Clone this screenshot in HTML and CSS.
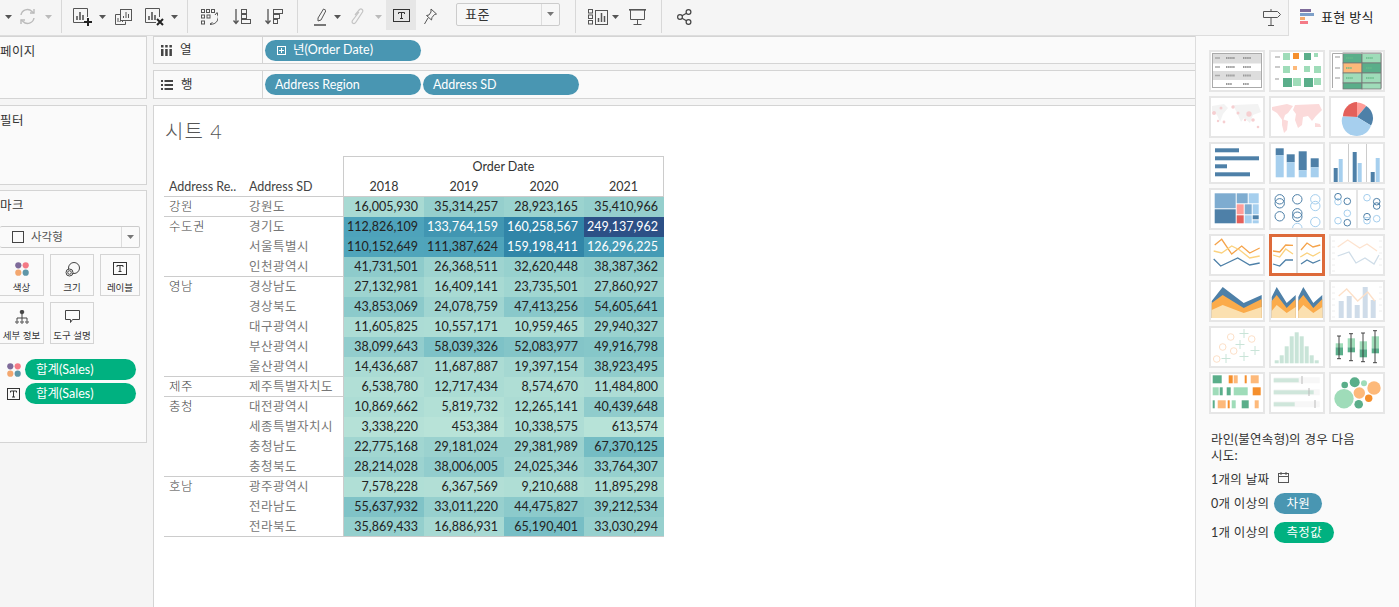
FILE: index.html
```html
<!DOCTYPE html>
<html lang="ko">
<head>
<meta charset="utf-8">
<title>시트 4</title>
<link rel="stylesheet" href="styles.css">
</head>
<body>
<header class="toolbar">
  <svg class="caret ml5" viewBox="0 0 7 4"><path d="M0 0h7L3.5 4z"/></svg>
  <svg class="ic ml7" width="17" height="17" viewBox="0 0 17 17" fill="none" stroke="#bbb" stroke-width="1.4"><path d="M2 7a6.5 6.5 0 0 1 11-3.5L15 5M15 10a6.5 6.5 0 0 1-11 3.5L2 12"/><path d="M15 1v4h-4M2 16v-4h4"/></svg>
  <svg class="caret caret-off ml9" viewBox="0 0 7 4"><path d="M0 0h7L3.5 4z"/></svg>
  <i class="sep ml9"></i>

  <svg class="ic ml11" width="19" height="18" viewBox="0 0 19 18" fill="none" stroke="#555"><path d="M12 14.5H.5V.5h14V9"/><path d="M4 12V8M7 12V4M10 12V7" stroke-width="1.6"/><path d="M15 10v8M11 14h8" stroke="#222" stroke-width="2"/></svg>
  <svg class="caret ml7" viewBox="0 0 7 4"><path d="M0 0h7L3.5 4z"/></svg>
  <svg class="ic ml9" width="17" height="16" viewBox="0 0 17 16" fill="none" stroke="#555"><path d="M5.500 5.500H.5v10h10v-3"/><rect x="5.500" y=".5" width="11" height="11"/><path d="M8.500 9V7M11 9V3M13.500 9V5M3 13v-4M5 13v-1M7.500 13v-1"/></svg>
  <svg class="ic ml13" width="19" height="18" viewBox="0 0 19 18" fill="none" stroke="#555"><path d="M11 14.500H.5V.5h14V9"/><path d="M4 12V8M7 12V4M10 12V7" stroke-width="1.6"/><path d="M12 11l6 6M18 11l-6 6" stroke="#222" stroke-width="2"/></svg>
  <svg class="caret ml7" viewBox="0 0 7 4"><path d="M0 0h7L3.500 4z"/></svg>
  <i class="sep ml9"></i>

  <svg class="ic ml13" width="17" height="16" viewBox="0 0 17 16" fill="none" stroke="#555"><rect x=".5" y=".5" width="3" height="3"/><rect x="5.500" y=".5" width="3" height="3"/><rect x="10.500" y=".5" width="3" height="3"/><rect x=".5" y="6" width="3" height="3"/><rect x="6" y="6" width="3" height="3"/><rect x=".5" y="12" width="3" height="3"/><path d="M16 4a7 7 0 0 1-7 11M14 6l2-2.500 1 3M9 15l2.500-1.500M9 15l2 1.500"/></svg>
  <svg class="ic ml15" width="18" height="17" viewBox="0 0 18 17" fill="none" stroke="#555"><path d="M3 1v14M.5 12.500 3 15.500l2.500-3" stroke-width="1.300"/><rect x="8.500" y="1.500" width="5" height="4"/><rect x="8.500" y="6.500" width="5" height="4"/><rect x="8.500" y="11.500" width="9" height="4"/></svg>
  <svg class="ic ml14" width="18" height="17" viewBox="0 0 18 17" fill="none" stroke="#555"><path d="M3 1v14M.5 12.500 3 15.500l2.500-3" stroke-width="1.300"/><rect x="8.500" y="1.500" width="9" height="4"/><rect x="8.500" y="6.500" width="6" height="4"/><rect x="8.500" y="11.500" width="4" height="4"/></svg>
  <i class="sep ml14"></i>

  <svg class="ic ml16" width="12" height="18" viewBox="0 0 12 18" fill="none" stroke="#555"><path d="M4 10 9.500 1 12 2.500 7 12 4 13z"/><path d="M0 17h12" stroke="#777" stroke-width="2"/></svg>
  <svg class="caret ml8" viewBox="0 0 7 4"><path d="M0 0h7L3.500 4z"/></svg>
  <svg class="ic ml10" width="13" height="18" viewBox="0 0 13 18" fill="none" stroke="#c4c4c4" stroke-width="1.200"><path d="M4 7 8.500 1.500c2-1.500 4 .5 3 2.500L5 14c-2 3-5 1-3.500-1.500L8 4"/></svg>
  <svg class="caret caret-off ml11" viewBox="0 0 7 4"><path d="M0 0h7L3.500 4z"/></svg>
  <div class="tbtn ml4"><svg width="17" height="13" viewBox="0 0 17 13" fill="none" stroke="#333"><rect x=".5" y=".5" width="16" height="12"/><path d="M5.500 5V3.500h6V5M8.500 3.500v6M7 9.500h3"/></svg></div>
  <svg class="ic ml8" width="13" height="17" viewBox="0 0 13 17" fill="none" stroke="#555"><path d="M7 1l5.500 5-2 .5-2.500 3-.5 2.500L2.500 7.500 5 7l2-3z"/><path d="M4 10 .5 16"/></svg>
  <div class="select ml19"><span class="select-t">표준</span><span class="select-b"><svg class="caret caret-g" viewBox="0 0 7 4"><path d="M0 0h7L3.500 4z"/></svg></span></div>
  <i class="sep ml15"></i>

  <svg class="ic ml12" width="20" height="16" viewBox="0 0 20 16" fill="none" stroke="#555"><rect x=".5" y=".5" width="4" height="3.500"/><rect x=".5" y="6" width="4" height="3.500"/><rect x=".5" y="11.500" width="4" height="3.500"/><rect x="7.500" y="1.500" width="12" height="14"/><path d="M10.500 13V9M13.500 13V4M16.500 13V7" stroke-width="1.500"/></svg>
  <svg class="caret ml4" viewBox="0 0 7 4"><path d="M0 0h7L3.500 4z"/></svg>
  <svg class="ic ml10" width="17" height="16" viewBox="0 0 17 16" fill="none" stroke="#555"><path d="M0 .8h17" stroke-width="1.600"/><path d="M1.500 1v9.500h14V1M8.500 10.500V15M4.500 15.500h8"/></svg>
  <i class="sep ml15"></i>

  <svg class="ic ml15" width="15" height="16" viewBox="0 0 15 16" fill="none" stroke="#444" stroke-width="1.200"><circle cx="3" cy="8" r="2.400"/><circle cx="11.500" cy="3" r="2.400"/><circle cx="11.500" cy="13" r="2.400"/><path d="M5 6.800 9.500 4.200M5 9.200l4.500 2.600"/></svg>

  <svg class="ic push" width="18" height="18" viewBox="0 0 18 18" fill="none" stroke="#555"><path d="M.5 3.500h14l3 3-3 3H.5zM8 1v2.500M8 9.500V17M5 17.500h6"/></svg>
  <div class="tab">
    <svg width="14" height="15" viewBox="0 0 14 15"><rect width="11" height="3" fill="#7e6b9a"/><rect y="4" width="14" height="3" fill="#7d9fc8"/><rect y="8" width="5" height="3" fill="#f5a96b"/><rect y="12" width="8" height="3" fill="#f47a86"/></svg>
    <span>표현 방식</span>
  </div>
</header>

<main class="workspace">
  <aside class="side">
    <section class="card card-pages"><h2 class="card-t">페이지</h2></section>
    <section class="card card-filter"><h2 class="card-t">필터</h2></section>
    <section class="card card-marks">
      <h2 class="card-t">마크</h2>
      <div class="mark-select">
        <span class="mark-sq"></span><span class="mark-name">사각형</span>
        <span class="mark-b"><svg class="caret caret-g" viewBox="0 0 7 4"><path d="M0 0h7L3.500 4z"/></svg></span>
      </div>
      <div class="mark-grid">
        <div class="mbtn mbtn-a"><svg width="14" height="14" viewBox="0 0 14 14"><circle cx="3.300" cy="3.300" r="3.100" fill="#7e6b9a"/><circle cx="10.700" cy="3.300" r="3.100" fill="#f47a86"/><circle cx="3.300" cy="10.700" r="3.100" fill="#f3a76f"/><circle cx="10.700" cy="10.700" r="3.100" fill="#5e96a8"/></svg><span>색상</span></div>
        <div class="mbtn"><svg width="15" height="15" viewBox="0 0 15 15" fill="none" stroke="#444"><circle cx="9" cy="6" r="5.500"/><circle cx="4.500" cy="10.500" r="3.500" fill="#fafafa"/><circle cx="4.500" cy="10.500" r="1.800"/></svg><span>크기</span></div>
        <div class="mbtn mbtn-c"><svg width="14" height="13" viewBox="0 0 14 13" fill="none" stroke="#333"><rect x=".5" y=".5" width="13" height="12"/><path d="M4 5V3.500h6V5M7 3.500v6M5.500 9.500h3"/></svg><span>레이블</span></div>
        <div class="mbtn mbtn-a"><svg width="14" height="14" viewBox="0 0 14 14" fill="none" stroke="#444"><circle cx="7" cy="2" r="1.800" fill="#444"/><path d="M7 4v4M2 10V8h10v2M7 8v2"/><circle cx="2" cy="12" r="1.200"/><circle cx="7" cy="12" r="1.200"/><circle cx="12" cy="12" r="1.200"/></svg><span>세부 정보</span></div>
        <div class="mbtn"><svg width="15" height="14" viewBox="0 0 15 14" fill="none" stroke="#444"><path d="M.5.500h14v9H7.500l-2 3v-3h-5z"/></svg><span>도구 설명</span></div>
      </div>
      <div class="enc">
        <svg width="14" height="14" viewBox="0 0 14 14"><circle cx="3.300" cy="3.300" r="3.100" fill="#7e6b9a"/><circle cx="10.700" cy="3.300" r="3.100" fill="#f47a86"/><circle cx="3.300" cy="10.700" r="3.100" fill="#f3a76f"/><circle cx="10.700" cy="10.700" r="3.100" fill="#5e96a8"/></svg>
        <span class="pill pill-g pill-enc">합계(Sales)</span>
      </div>
      <div class="enc">
        <svg width="14" height="12" viewBox="0 0 14 12" fill="none" stroke="#333"><rect x=".5" y=".5" width="12" height="11"/><path d="M3.500 4.500V3h6v1.500M6.500 3v6M5 9h3"/></svg>
        <span class="pill pill-g pill-enc">합계(Sales)</span>
      </div>
    </section>
  </aside>

  <div class="center">
    <div class="shelf">
      <div class="shelf-l"><svg width="11" height="11" viewBox="0 0 11 11" fill="#444"><rect y="4" width="2.500" height="7"/><rect x="4.200" y="4" width="2.500" height="7"/><rect x="8.400" y="4" width="2.500" height="7"/><rect y="0" width="2.500" height="2.500"/><rect x="4.200" y="0" width="2.500" height="2.500"/><rect x="8.400" y="0" width="2.500" height="2.500"/></svg><span>열</span></div>
      <div class="shelf-p"><span class="pill pill-b pill-shelf"><svg width="9" height="9" viewBox="0 0 9 9" fill="none" stroke="#fff"><rect x=".5" y=".5" width="8" height="8"/><path d="M4.500 2v5M2 4.500h5"/></svg>년(Order Date)</span></div>
    </div>
    <div class="shelf">
      <div class="shelf-l"><svg width="12" height="10" viewBox="0 0 12 10" fill="#444"><rect width="2" height="2"/><rect x="3.500" width="8.500" height="2"/><rect y="4" width="2" height="2"/><rect x="3.500" y="4" width="8.500" height="2"/><rect y="8" width="2" height="2"/><rect x="3.500" y="8" width="8.500" height="2"/></svg><span>행</span></div>
      <div class="shelf-p"><span class="pill pill-b pill-shelf pill-txt">Address Region</span><span class="pill pill-b pill-shelf pill-txt">Address SD</span></div>
    </div>

    <section class="view">
      <h1 class="sheet">시트 4</h1>
      <div class="tbl">
        <div class="hd-blank"></div>
        <div class="hd-od">Order Date</div>
        <div class="hd hd-f">Address Re..</div>
        <div class="hd hd-f">Address SD</div>
        <div class="hd hd-y hd-first">2018</div>
        <div class="hd hd-y">2019</div>
        <div class="hd hd-y">2020</div>
        <div class="hd hd-y hd-last">2021</div>

        <div class="reg gs span1">강원</div><div class="sd gs">강원도</div><div class="n">16,005,930</div><div class="n">35,314,257</div><div class="n">28,923,165</div><div class="n">35,410,966</div>

        <div class="reg gs span3">수도권</div><div class="sd gs">경기도</div><div class="n">112,826,109</div><div class="n">133,764,159</div><div class="n">160,258,567</div><div class="n">249,137,962</div>
        <div class="sd">서울특별시</div><div class="n">110,152,649</div><div class="n">111,387,624</div><div class="n">159,198,411</div><div class="n">126,296,225</div>
        <div class="sd">인천광역시</div><div class="n">41,731,501</div><div class="n">26,368,511</div><div class="n">32,620,448</div><div class="n">38,387,362</div>

        <div class="reg gs span5">영남</div><div class="sd gs">경상남도</div><div class="n">27,132,981</div><div class="n">16,409,141</div><div class="n">23,735,501</div><div class="n">27,860,927</div>
        <div class="sd">경상북도</div><div class="n">43,853,069</div><div class="n">24,078,759</div><div class="n">47,413,256</div><div class="n">54,605,641</div>
        <div class="sd">대구광역시</div><div class="n">11,605,825</div><div class="n">10,557,171</div><div class="n">10,959,465</div><div class="n">29,940,327</div>
        <div class="sd">부산광역시</div><div class="n">38,099,643</div><div class="n">58,039,326</div><div class="n">52,083,977</div><div class="n">49,916,798</div>
        <div class="sd">울산광역시</div><div class="n">14,436,687</div><div class="n">11,687,887</div><div class="n">19,397,154</div><div class="n">38,923,495</div>

        <div class="reg gs span1">제주</div><div class="sd gs">제주특별자치도</div><div class="n">6,538,780</div><div class="n">12,717,434</div><div class="n">8,574,670</div><div class="n">11,484,800</div>

        <div class="reg gs span4">충청</div><div class="sd gs">대전광역시</div><div class="n">10,869,662</div><div class="n">5,819,732</div><div class="n">12,265,141</div><div class="n">40,439,648</div>
        <div class="sd">세종특별자치시</div><div class="n">3,338,220</div><div class="n">453,384</div><div class="n">10,338,575</div><div class="n">613,574</div>
        <div class="sd">충청남도</div><div class="n">22,775,168</div><div class="n">29,181,024</div><div class="n">29,381,989</div><div class="n">67,370,125</div>
        <div class="sd">충청북도</div><div class="n">28,214,028</div><div class="n">38,006,005</div><div class="n">24,025,346</div><div class="n">33,764,307</div>

        <div class="reg gs span3">호남</div><div class="sd gs">광주광역시</div><div class="n">7,578,228</div><div class="n">6,367,569</div><div class="n">9,210,688</div><div class="n">11,895,298</div>
        <div class="sd">전라남도</div><div class="n">55,637,932</div><div class="n">33,011,220</div><div class="n">44,475,827</div><div class="n">39,212,534</div>
        <div class="sd">전라북도</div><div class="n">35,869,433</div><div class="n">16,886,931</div><div class="n">65,190,401</div><div class="n">33,030,294</div>
        <div class="tbl-end"></div>
      </div>
    </section>
  </div>

  <aside class="showme">
    <div class="thumbs">
      <svg class="th" viewBox="2 2 52 38"><rect x="3.500" y="3.500" width="49" height="34" fill="#fff" stroke="#aaa"/><rect x="4" y="4" width="48" height="9.500" fill="#ddd"/><rect x="4" y="21" width="48" height="9" fill="#ddd"/><path d="M6 8h5M6 17h5M6 25.500h5" stroke="#aaa" stroke-width="1.400"/><path d="M17 8h9M34 8h8M17 17h9M34 17h8M17 25.500h9M34 25.500h8M17 34h6M34 34h6" stroke="#999" stroke-width="2" stroke-dasharray="1.500 .6"/></svg>
      <svg class="th" viewBox="2 2 52 38"><path d="M6 7h5M6 17h5M6 29h4" stroke="#bbb" stroke-width="1.500"/><g fill="#9fdcb9"><rect x="14" y="3" width="7" height="7"/><rect x="45" y="3" width="4" height="4"/><rect x="14" y="16" width="7" height="7"/><rect x="35" y="16" width="6" height="6"/><rect x="45" y="16" width="7" height="7"/><rect x="24" y="28" width="8" height="8"/><rect x="45" y="28" width="7" height="7"/></g><g fill="#5aae8a"><rect x="35" y="3" width="7" height="7"/><rect x="14" y="28" width="9" height="9"/><rect x="35" y="28" width="9" height="9"/></g><rect x="24" y="3" width="6" height="6" fill="#f58f2d"/><rect x="24" y="16" width="4" height="4" fill="#fdb97a"/></svg>
      <svg class="th" viewBox="2 2 52 38"><g stroke="#777" stroke-width=".8"><rect x="14" y="3" width="19" height="10" fill="#5aae8a"/><rect x="33" y="3" width="19" height="10" fill="#9fdcb9"/><rect x="14" y="13" width="19" height="10" fill="#fdb97a"/><rect x="33" y="13" width="19" height="10" fill="#5aae8a"/><rect x="14" y="23" width="19" height="10" fill="#9fdcb9"/><rect x="33" y="23" width="19" height="10" fill="#9fdcb9"/><rect x="14" y="33" width="19" height="6" fill="#5aae8a"/><rect x="33" y="33" width="19" height="6" fill="#9fdcb9"/></g><path d="M3.500 38V3.500h49V38" fill="none" stroke="#aaa"/><path d="M6 7h5M6 18h5M6 28h5" stroke="#bbb" stroke-width="1.500"/><path d="M17 8h7M37 8h7M17 18h6M37 18h6M17 28h7M37 28h8" stroke="#6b8" stroke-width="1.600" stroke-dasharray="1.500 .6"/></svg>

      <svg class="th" viewBox="2 2 52 38"><g fill="#f3f3f3"><path d="M3 10l12-2 4 4-5 6-3 8-3-7-5-4z"/><path d="M24 9l25-1 3 8-8 3-3 8-6-5-3 4-4-9z"/></g><g fill="#f6cfd1"><circle cx="5" cy="17" r="2"/><circle cx="12" cy="12" r="1.500"/><circle cx="24" cy="11" r="1.700"/><circle cx="29" cy="17" r="1.500"/><circle cx="40" cy="18" r="2.700"/><circle cx="44" cy="24" r="1.800"/><circle cx="9" cy="25" r="1.200"/><circle cx="15" cy="26" r="1.400"/><circle cx="36" cy="24" r="1.200"/><circle cx="49" cy="31" r="1.300"/></g></svg>
      <svg class="th" viewBox="2 2 52 38"><g fill="#fbdada"><path d="M3 11l15-3 6 2-5 7-3 2-2 6-6-8-5-3z"/><path d="M13 23l6 2-1 9-3 3-2-8z"/><path d="M26 9l24-1 3 6-6 6-4 5-4-5-5 1-1 8-4 3-3-8 1-6-3-4z"/><path d="M46 27l5 1 1 3-6 0z"/></g></svg>
      <svg class="th" viewBox="2 2 52 38"><path d="M28 21 14 20.500A14.500 14.500 0 0 1 28 6z" fill="#e4605a"/><path d="M28 21V6.500A14.500 14.500 0 0 1 37.300 10z" fill="#ff9d98"/><path d="M28 21l9.300-11A14.500 14.500 0 0 1 42 29.500z" fill="#4e80a8"/><path d="M28 21l14 8.500A14.500 14.500 0 0 1 13.500 20.500z" fill="#a6cfee"/></svg>

      <svg class="th" viewBox="2 2 52 38"><g fill="#4e80a8"><rect x="6" y="6.300" width="24" height="4"/><rect x="6" y="14.300" width="44" height="4"/><rect x="6" y="22.300" width="12" height="4"/><rect x="6" y="30.300" width="35" height="4"/></g></svg>
      <svg class="th" viewBox="2 2 52 38"><g fill="#4e80a8"><rect x="6.700" y="6.300" width="8" height="7"/><rect x="17.700" y="12.300" width="8" height="8"/><rect x="29.700" y="9.300" width="8" height="19"/><rect x="41.700" y="16.300" width="8" height="9"/></g><g fill="#a6cfee"><rect x="6.700" y="13.300" width="8" height="22"/><rect x="17.700" y="20.300" width="8" height="15"/><rect x="29.700" y="28.300" width="8" height="7"/><rect x="41.700" y="25.300" width="8" height="10"/></g></svg>
      <svg class="th" viewBox="2 2 52 38"><path d="M19.500 2v38M37.500 2v38" stroke="#ccc"/><g fill="#4e80a8"><rect x="4.700" y="26" width="4" height="14"/><rect x="23.700" y="10" width="4" height="30"/><rect x="41.700" y="30" width="4" height="10"/></g><g fill="#a6cfee"><rect x="9.700" y="17" width="4" height="23"/><rect x="28.700" y="21" width="4" height="19"/><rect x="46.700" y="16" width="4" height="24"/></g></svg>

      <svg class="th" viewBox="2 2 52 38"><rect x="5.700" y="5.300" width="21" height="15" fill="#7eacd0"/><rect x="5.700" y="21.300" width="21" height="14" fill="#4e80a8"/><rect x="27.700" y="5.300" width="11" height="10" fill="#7eacd0"/><rect x="39.700" y="5.300" width="10" height="10" fill="#a6cfee"/><rect x="27.700" y="16.300" width="7" height="10" fill="#ff9d98"/><rect x="35.700" y="16.300" width="7" height="10" fill="#7eacd0"/><rect x="43.700" y="16.300" width="6" height="10" fill="#a6cfee"/><rect x="27.700" y="27.300" width="7" height="8" fill="#e4605a"/><rect x="35.700" y="27.300" width="7" height="8" fill="#a6cfee"/><rect x="43.700" y="27.300" width="6" height="4" fill="#4e80a8"/><rect x="43.700" y="32.300" width="6" height="3" fill="#a6cfee"/></svg>
      <svg class="th" viewBox="2 2 52 38" fill="none" stroke-width="1"><g stroke="#4e80a8"><circle cx="10.700" cy="11.300" r="4.700"/><circle cx="10.700" cy="15.300" r="4.700"/><circle cx="28.300" cy="11.300" r="4.700"/><circle cx="28.300" cy="25.300" r="4.700"/><circle cx="28.300" cy="28.700" r="4.700"/><circle cx="10.700" cy="28.300" r="4.700"/></g><g stroke="#a6cfee"><circle cx="46.300" cy="11.300" r="4.700"/><circle cx="46.300" cy="18" r="4.700"/><circle cx="46.300" cy="34" r="4.700"/><circle cx="28.300" cy="40" r="4.700"/></g></svg>
      <svg class="th" viewBox="2 2 52 38" fill="none" stroke-width="1"><path d="M28 2v38" stroke="#ccc"/><g stroke="#4e80a8"><circle cx="9" cy="8.700" r="3.300"/><circle cx="18.300" cy="13.300" r="3.300"/><circle cx="18.300" cy="34.700" r="3.300"/><circle cx="47.700" cy="13.700" r="3.300"/><circle cx="47.700" cy="18" r="3.300"/><circle cx="38" cy="28.700" r="3.300"/></g><g stroke="#a6cfee"><circle cx="9" cy="13.700" r="3.300"/><circle cx="18.300" cy="25.300" r="3.300"/><circle cx="9" cy="32.700" r="3.300"/><circle cx="38" cy="9.700" r="3.300"/><circle cx="38" cy="32.700" r="3.300"/><circle cx="47.700" cy="30.700" r="3.300"/></g></svg>

      <svg class="th" viewBox="2 2 52 38" fill="none" stroke-width="1.300"><path d="M5.700 11l7-5.700 10 14.700 10-8 8 7 10-5" stroke="#f5a34a"/><path d="M4.700 17l8 2 10-7 8 4 10 8 10-2" stroke="#fbd27e"/><path d="M4.700 25l7 7 17-8 12 7 10-2" stroke="#4e80a8"/></svg>
      <svg class="th th-on" viewBox="3 3 50 36" fill="none" stroke-width="1.300"><path d="M28 2v38" stroke="#ccc"/><path d="M4 17l6.700 1 6-7 7.300.3M32 16l6-7 6 4 7.300-2" stroke="#f5a34a"/><path d="M4 21l6.700 2 6-8 7.300 5M31.300 23l6.700-4 6 3 7.300-4" stroke="#fbd27e"/><path d="M4 30l6.700 2 6-6H24M32 30l6-4 6 3 7.300-3" stroke="#4e80a8"/></svg>
      <svg class="th" viewBox="2 2 52 38" fill="none"><path d="M3 7h3M3 13h3M3 19h3M3 25h3M3 31h3M3 37h3M50 7h3M50 13h3M50 19h3M50 25h3M50 31h3" stroke="#eee"/><path d="M8.700 13l10-7 12 8 7.300-4 10 7" stroke="#fde3cf" stroke-width="1.300"/><path d="M8.700 22 20 18l7 11 9-5 9 6 5-9" stroke="#cfdde8" stroke-width="1.300"/></svg>

      <svg class="th" viewBox="2 2 52 38"><path d="M2.700 21l11-14 21 16 18-8v23h-50z" fill="#4e80a8"/><path d="M2.700 23l11-8 21 13 18-9v19h-50z" fill="#fbab4a"/><path d="M2.700 30l11-5 21 8 18-6v11h-50z" fill="#fbe0b0"/></svg>
      <svg class="th" viewBox="2 2 52 38"><path d="M2.700 17l5-10 10 16 9-8v23h-24zM29.300 17l5-10 10 16 9-8v23h-24z" fill="#4e80a8"/><path d="M2.700 21l5-6 10 13 9-9v19h-24zM29.300 21l5-6 10 13 9-9v19h-24z" fill="#fbab4a"/><path d="M2.700 31l5-6 10 8 9-6v11h-24zM29.300 31l5-6 10 8 9-6v11h-24z" fill="#fbe0b0"/></svg>
      <svg class="th" viewBox="2 2 52 38"><path d="M3 7h3M3 13h3M3 19h3M3 25h3M3 31h3M3 37h3M50 7h3M50 13h3M50 19h3M50 25h3M50 31h3" stroke="#eee"/><g fill="#cfdce9"><rect x="9.700" y="21" width="5" height="17"/><rect x="17.700" y="16" width="5" height="22"/><rect x="25.700" y="25" width="5" height="13"/><rect x="33.700" y="7" width="5" height="31"/><rect x="41.700" y="20" width="5" height="18"/></g><path d="M9.700 16l8-7 11 12 10-9 7 9" fill="none" stroke="#fde0c8" stroke-width="1.300"/></svg>

      <svg class="th" viewBox="2 2 52 38" fill="none" stroke-width="1"><g stroke="#fde0c8"><circle cx="21.700" cy="11" r="3.300"/><circle cx="42.700" cy="13" r="3.300"/><circle cx="13.700" cy="21" r="3.300"/><circle cx="24.700" cy="25" r="3.300"/><circle cx="7.700" cy="33" r="3.300"/></g><path d="M35 3v9M30.500 7.500h9M31 14v9M26.500 18.500h9M46 20v9M41.500 24.500h9M35 26v9M30.500 30.500h9M17 28v9M12.500 32.500h9" stroke="#c9e4d8"/></svg>
      <svg class="th" viewBox="2 2 52 38"><g fill="#c9e4d8"><rect x="5.700" y="34.300" width="4" height="3"/><rect x="10.700" y="29.300" width="4" height="8"/><rect x="15.700" y="20.300" width="4" height="17"/><rect x="20.700" y="10.300" width="4" height="27"/><rect x="25.700" y="6.300" width="4" height="31"/><rect x="30.700" y="10.300" width="4" height="27"/><rect x="35.700" y="20.300" width="4" height="17"/><rect x="40.700" y="29.300" width="4" height="8"/><rect x="45.700" y="34.300" width="4" height="3"/></g></svg>
      <svg class="th" viewBox="2 2 52 38"><g fill="#9fdcb9"><rect x="6.700" y="17.300" width="7.300" height="4"/><rect x="18.700" y="12.300" width="7.300" height="9"/><rect x="30.700" y="15.300" width="7.300" height="8"/><rect x="42.700" y="10.300" width="7.300" height="12"/></g><g fill="#5aae8a"><rect x="6.700" y="21.300" width="7.300" height="8"/><rect x="18.700" y="21.300" width="7.300" height="5"/><rect x="30.700" y="23.300" width="7.300" height="8"/><rect x="42.700" y="22.300" width="7.300" height="5"/></g><path d="M10 10v22.700M22 7.700v27M34 7v28.700M46 4.700v32M8 10h4M20 7.700h4M32 7h4M44 4.700h4M8 32.700h4M20 34.700h4M32 35.700h4M44 36.700h4" stroke="#333" fill="none" stroke-width=".9"/></svg>

      <svg class="th" viewBox="2 2 52 38"><g fill="#5aae8a"><rect x="3.700" y="3.300" width="9" height="8"/><rect x="10.700" y="15.300" width="3" height="8"/><rect x="17.700" y="15.300" width="4" height="8"/><rect x="3.700" y="28.300" width="2" height="8"/><rect x="32.700" y="28.300" width="7" height="8"/></g><g fill="#f58f2d"><rect x="19.700" y="3.300" width="4" height="8"/><rect x="35.700" y="3.300" width="2" height="8"/><rect x="43.700" y="15.300" width="8" height="8"/><rect x="18.700" y="28.300" width="2" height="8"/></g><g fill="#fdb97a"><rect x="24.700" y="3.300" width="4" height="8"/><rect x="41.700" y="3.300" width="8" height="8"/><rect x="8.700" y="28.300" width="8" height="8"/><rect x="45.700" y="28.300" width="4" height="8"/></g><g fill="#9fdcb9"><rect x="3.700" y="15.300" width="6" height="8"/><rect x="24.700" y="15.300" width="14" height="8"/><rect x="22.700" y="28.300" width="4" height="8"/></g></svg>
      <svg class="th" viewBox="2 2 52 38"><g fill="#f7f7f7"><rect x="4.700" y="5.300" width="46" height="6"/><rect x="4.700" y="17.300" width="46" height="6"/><rect x="4.700" y="29.300" width="46" height="6"/></g><g fill="#cfe6db"><rect x="4.700" y="6.300" width="25" height="4"/><rect x="4.700" y="18.300" width="40" height="4"/><rect x="4.700" y="30.300" width="21" height="4"/></g><path d="M33 4v8M40 16v8M46 28v8" stroke="#bbb"/></svg>
      <svg class="th" viewBox="2 2 52 38"><circle cx="15" cy="26.700" r="9.700" fill="#9fdcb9"/><circle cx="15.700" cy="13" r="3.300" fill="#5aae8a"/><circle cx="25.700" cy="10.300" r="5" fill="#5aae8a"/><circle cx="35" cy="11.300" r="3" fill="#9fdcb9"/><circle cx="45" cy="16" r="6.700" fill="#fdb97a"/><circle cx="30.300" cy="21" r="5.700" fill="#fdb97a"/><circle cx="39.700" cy="26.300" r="3.700" fill="#f58f2d"/><circle cx="29.700" cy="32.300" r="4.300" fill="#5aae8a"/></svg>
    </div>
    <p class="hint">라인(불연속형)의 경우 다음 시도:</p>
    <p class="need need-date">1개의 날짜<svg width="11" height="11" viewBox="0 0 11 11" fill="none" stroke="#555"><rect x=".5" y="1.500" width="10" height="9"/><path d="M.5 4.500h10M3 0v3M8 0v3"/></svg></p>
    <p class="need">0개 이상의<span class="pill pill-b pill-need">차원</span></p>
    <p class="need need-m">1개 이상의<span class="pill pill-g pill-need pill-wide">측정값</span></p>
  </aside>
</main>
<script src="script.js"></script>
</body>
</html>
```
FILE: styles.css
```css
* { box-sizing: border-box; }
html, body { margin: 0; height: 607px; overflow: hidden; }
body {
  background: #f5f5f5;
  color: #333;
  font: 12.5px/16px Lato, "Noto Sans CJK KR", sans-serif;
}
h1, h2, p { margin: 0; font-weight: normal; }

/* toolbar */
.toolbar {
  display: flex;
  align-items: center;
  height: 36px;
  padding-bottom: 2px;
  border-bottom: 1px solid #ddd;
}
.toolbar > * { flex: none; }
.sep { width: 1px; height: 33px; margin-top: -1px; background: #d8d8d8; }
.caret { display: block; width: 7px; height: 4px; fill: #555; flex: none; }
.caret-off { fill: #bbb; }
.caret-g { fill: #777; }
.ml4 { margin-left: 4px; } .ml5 { margin-left: 5px; } .ml7 { margin-left: 7px; } .ml8 { margin-left: 8px; }
.ml9 { margin-left: 9px; } .ml10 { margin-left: 10px; } .ml11 { margin-left: 11px; } .ml12 { margin-left: 12px; }
.ml13 { margin-left: 13px; } .ml14 { margin-left: 14px; } .ml15 { margin-left: 15px; } .ml16 { margin-left: 16px; }
.ml19 { margin-left: 19px; }
.tbtn {
  display: flex; align-items: center; justify-content: center;
  width: 30px; height: 30px; margin-top: -3px;
  background: #e6e6e6;
}
.select {
  display: flex; width: 104px; height: 23px; margin-top: -5px;
  border: 1px solid #ccc; border-radius: 2px; background: #f7f7f7;
}
.select-t { flex: 1; padding-left: 8px; font-size: 13px; letter-spacing: .5px; line-height: 21px; color: #333; }
.select-b { display: flex; align-items: center; justify-content: center; width: 18px; border-left: 1px solid #ddd; }
.push { margin-left: auto; margin-right: 7px; }
.tab {
  display: flex; align-items: center; gap: 7px;
  width: 111px; height: 36px; margin: -1px 0 -3px;
  padding: 0 0 2px 11px;
  border-left: 1px solid #ddd;
  background: #fafafa;
  font-size: 13px; color: #222; letter-spacing: .3px;
}

/* workspace */
.workspace { display: flex; height: 571px; }
.side { width: 147px; flex: none; display: flex; flex-direction: column; gap: 6px; }
.card { border: 1px solid #d4d4d4; border-left: 0; background: #fafafa; }
.card-pages { height: 63px; }
.card-filter { height: 80px; }
.card-marks { height: 253px; margin-top: -1px; }
.card-t { font-size: 12.5px; line-height: 16px; padding-top: 7px; color: #333; letter-spacing: .4px; }
.mark-select {
  display: flex; align-items: center; width: 140px; height: 22px; margin-top: 12px;
  border: 1px solid #ccc; border-left: 0; border-radius: 2px; background: #fafafa;
}
.mark-sq { width: 12px; height: 12px; margin-left: 12px; border: 1px solid #444; }
.mark-name { flex: 1; margin-left: 7px; font-size: 11.500px; color: #555; }
.mark-b { display: flex; align-items: center; justify-content: center; width: 18px; height: 100%; border-left: 1px solid #ddd; }
.mark-grid { display: grid; grid-template-columns: 44px 44px 40px; grid-auto-rows: 42px; column-gap: 6px; row-gap: 6px; margin-top: 6px; }
.mbtn {
  display: flex; flex-direction: column; align-items: center; justify-content: space-between;
  padding: 7px 0 1px;
  border: 1px solid #d4d4d4; background: #fafafa;
  font-size: 9.500px; line-height: 12px; color: #333; white-space: nowrap;
}
.mbtn-a { border-left: 0; }
.enc { display: flex; align-items: center; height: 21px; margin-bottom: 3px; padding-left: 7px; gap: 4px; }
.mark-grid + .enc { margin-top: 15px; }

/* pills */
.pill { display: inline-flex; align-items: center; height: 21px; border-radius: 11px; color: #fff; white-space: nowrap; }
.pill-b { background: #4996b2; }
.pill-g { background: #00b180; }
.pill-enc { width: 111px; padding-left: 11px; }
.pill-shelf { width: 156px; padding-left: 12px; gap: 7px; margin-right: 2px; }
.pill-txt { padding-left: 10px; }
.pill-need { width: 48px; justify-content: center; margin-left: 5px; }
.pill-wide { width: 60px; }

/* center */
.center { flex: 1; min-width: 0; margin-left: 6px; display: flex; flex-direction: column; }
.shelf { display: flex; height: 28px; margin-bottom: 6px; border: 1px solid #d4d4d4; border-right: 0; background: #fafafa; }
.shelf + .shelf { height: 29px; }
.shelf-l { display: flex; align-items: center; gap: 8px; width: 109px; padding-left: 7px; border-right: 1px solid #d4d4d4; color: #333; }
.shelf-p { display: flex; align-items: center; padding-left: 2px; }
.view { flex: 1; min-height: 0; border: 1px solid #d4d4d4; border-bottom: 0; border-right: 0; background: #fff; padding: 0 0 0 10px; }
.sheet { font-size: 20px; line-height: 26px; padding: 12px 0 0 1px; color: #555; font-weight: 300; letter-spacing: 1px; }

.tbl {
  display: grid;
  grid-template-columns: 80px 100px repeat(4, 80px);
  grid-template-rows: 20px 21px;
  grid-auto-rows: 20px;
  margin-top: 12px;
  width: 500px;
}
.hd-blank { grid-column: 1 / 3; border-right: 1px solid #ccc; }
.hd-od { grid-column: 3 / 7; text-align: center; line-height: 20px; border-top: 1px solid #ccc; border-right: 1px solid #ccc; }
.hd { line-height: 21px; border-bottom: 1px solid #ccc; white-space: nowrap; }
.hd-f { padding-left: 5px; color: #444; }
.hd-f + .hd-f { border-right: 1px solid #ccc; }
.hd-y { text-align: center; }
.hd-last { border-right: 1px solid #ccc; }
.reg, .sd { padding-left: 5px; line-height: 18px; letter-spacing: .5px; white-space: nowrap; }
.reg { color: #444; grid-column: 1; font-weight: 300; }
.sd { color: #777; grid-column: 2; border-right: 1px solid #ccc; padding-top: 1px; }
.gs { border-top: 1px solid #ccc; margin-top: -1px; padding-top: 1px; }
.span1 { grid-row: span 1; } .span3 { grid-row: span 3; } .span4 { grid-row: span 4; } .span5 { grid-row: span 5; }
.n { text-align: right; padding-right: 6px; line-height: 20px; color: #222; background: #b5e3d7; }
.n-light { color: #fff; }
.tbl-end { grid-column: 1 / 7; height: 1px; margin-top: -1px; background: #ccc; }

/* show me */
.showme { width: 204px; flex: none; padding: 14px 0 0 13px; border-left: 1px solid #ddd; background: #fafafa; }
.thumbs { display: grid; grid-template-columns: repeat(3, 56px); grid-auto-rows: 42px; column-gap: 4px; row-gap: 4px; }
.th { display: block; width: 56px; height: 42px; border: 2px solid #e6e6e6; background: #fff; }
.th-on { border: 3px solid #dd6a3a; }
.hint { width: 150px; margin: 18px 0 0 2px; color: #333; letter-spacing: .3px; }
.need { display: flex; align-items: center; height: 21px; margin: 1px 0 0 2px; white-space: nowrap; color: #333; letter-spacing: .3px; }
.need-date { margin-top: 5px; margin-bottom: 3px; gap: 9px; }
.need-date svg { margin-top: -4px; }
.need-m { margin-top: 8px; }
```
FILE: script.js
```js
// Colour each measure cell on the sequential Sum(Sales) scale.
var stops = [
  [0, [184, 227, 216]],
  [60e6, [124, 193, 198]],
  [112e6, [78, 164, 187]],
  [160e6, [49, 133, 168]],
  [250e6, [44, 79, 134]]
];
document.querySelectorAll('.n').forEach(function (cell) {
  var v = Number(cell.textContent.replace(/,/g, ''));
  for (var i = 1; i < stops.length; i++) {
    if (v <= stops[i][0]) {
      var a = stops[i - 1], b = stops[i], t = (v - a[0]) / (b[0] - a[0]);
      var c = a[1].map(function (x, k) { return Math.round(x + (b[1][k] - x) * t); });
      cell.style.backgroundColor = 'rgb(' + c.join(',') + ')';
      break;
    }
  }
  if (v > 120e6) cell.classList.add('n-light');
});
```
